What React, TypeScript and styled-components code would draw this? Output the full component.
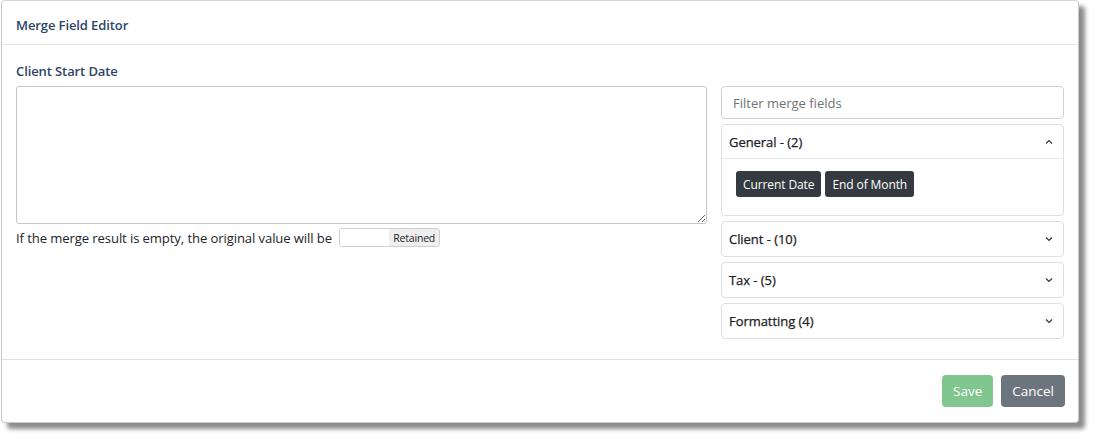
import React from "react";
import styled, { createGlobalStyle } from "styled-components";

const Global = createGlobalStyle`
  html, body { margin: 0; padding: 0; background: #ffffff; }
  body { font-family: "Open Sans", "Noto Sans", sans-serif; color: #212529; }
  * { box-sizing: border-box; }
`;

const Page = styled.div`
  width: 1095px;
  height: 438px;
  padding: 0 0 0 1px;
`;

const Dialog = styled.div`
  width: 1078px;
  height: 423px;
  background: #fff;
  border: 1px solid #c9c9c9;
  border-top-color: #d6d6d6;
  border-radius: 4px;
  box-shadow: 6px 6px 4px rgba(0, 0, 0, 0.45);
  display: flex;
  flex-direction: column;
`;

const Header = styled.div`
  height: 44px;
  border-bottom: 1px solid #e5e5e5;
  display: flex;
  align-items: center;
  padding: 5px 14px 0;
`;

const Title = styled.div`
  font-size: 13px;
  font-weight: 600;
  color: #2b4566;
  letter-spacing: -0.1px;
`;

const Body = styled.div`
  flex: 1;
  padding: 16px 14px 0;
  border-bottom: 1px solid #e0e0e6;
`;

const FieldLabel = styled.div`
  font-size: 13px;
  font-weight: 600;
  color: #2b4566;
  line-height: 20px;
  margin-bottom: 5px;
  letter-spacing: -0.1px;
`;

const Columns = styled.div`
  display: flex;
  gap: 14px;
`;

const LeftCol = styled.div`
  width: 691px;
  display: flex;
  flex-direction: column;
`;

const TextArea = styled.textarea`
  width: 691px;
  height: 138px;
  border: 1px solid #c6c6c6;
  border-radius: 3px;
  resize: vertical;
  font-family: inherit;
  margin: 0;
  display: block;
  outline: none;
`;

const EmptyRow = styled.div`
  display: flex;
  align-items: center;
  gap: 7px;
  margin-top: 4px;
  font-size: 13.1px;
  color: #212529;
  letter-spacing: -0.1px;
`;

const Toggle = styled.div`
  width: 101px;
  height: 19px;
  border: 1px solid #cfcfcf;
  border-radius: 3px;
  display: flex;
  overflow: hidden;
`;

const ToggleHalf = styled.div<{ $on?: boolean }>`
  flex: 1;
  background: ${(p) => (p.$on ? "#efefef" : "#ffffff")};
  font-size: 10.5px;
  display: flex;
  align-items: center;
  justify-content: center;
  color: #222;
  letter-spacing: -0.2px;
`;

const RightCol = styled.div`
  width: 345px;
  display: flex;
  flex-direction: column;
  gap: 5px;
`;

const Filter = styled.input`
  width: 100%;
  height: 33px;
  border: 1px solid #cdd1d5;
  border-radius: 4px;
  padding: 0 11px;
  font-family: inherit;
  font-size: 13px;
  outline: none;
  margin-bottom: 0;
  &::placeholder { color: #707478; }
`;

const Card = styled.div`
  border: 1px solid #dcdfe3;
  border-radius: 4px;
  display: flex;
  flex-direction: column;
`;

const CardHeader = styled.div<{ $open?: boolean }>`
  height: 34px;
  display: flex;
  align-items: center;
  justify-content: space-between;
  padding: 0 10px 0 7px;
  font-size: 13px;
  font-weight: 500;
  color: #1c2024;
  -webkit-text-stroke: 0.25px #1c2024;
  letter-spacing: -0.05px;
  border-bottom: ${(p) => (p.$open ? "1px solid #e5e7ea" : "none")};
`;

const CardBody = styled.div`
  display: flex;
  gap: 4px;
  padding: 12px 14px 18px;
`;

const FieldButton = styled.button`
  height: 26px;
  padding: 0 7px;
  background: #343a40;
  color: #fff;
  border: none;
  border-radius: 3px;
  font-family: inherit;
  font-size: 12px;
  letter-spacing: -0.1px;
`;

const Footer = styled.div`
  height: 62px;
  display: flex;
  justify-content: flex-end;
  align-items: flex-start;
  gap: 8px;
  padding: 15px 13px 0;
`;

const Btn = styled.button<{ $variant: "save" | "cancel" }>`
  height: 32px;
  border: none;
  border-radius: 4px;
  color: #fff;
  font-family: inherit;
  font-size: 13.5px;
  padding: 0 11px;
  background: ${(p) => (p.$variant === "save" ? "#80c68e" : "#6c757d")};
`;

const Chevron = ({ up }: { up?: boolean }) => (
  <svg width="8" height="6" viewBox="0 0 8 6">
    <polyline
      points={up ? "1,4.5 4,1.5 7,4.5" : "1,1.5 4,4.5 7,1.5"}
      fill="none"
      stroke="#333"
      strokeWidth="1.2"
    />
  </svg>
);

const groups = [
  { name: "Client - (10)" },
  { name: "Tax - (5)" },
  { name: "Formatting (4)" },
];

export default function App() {
  return (
    <Page>
      <Global />
      <Dialog>
        <Header>
          <Title>Merge Field Editor</Title>
        </Header>
        <Body>
          <FieldLabel>Client Start Date</FieldLabel>
          <Columns>
            <LeftCol>
              <TextArea />
              <EmptyRow>
                <span>If the merge result is empty, the original value will be</span>
                <Toggle>
                  <ToggleHalf />
                  <ToggleHalf $on>Retained</ToggleHalf>
                </Toggle>
              </EmptyRow>
            </LeftCol>
            <RightCol>
              <Filter placeholder="Filter merge fields" />
              <Card>
                <CardHeader $open>
                  <span>General - (2)</span>
                  <Chevron up />
                </CardHeader>
                <CardBody>
                  <FieldButton>Current Date</FieldButton>
                  <FieldButton>End of Month</FieldButton>
                </CardBody>
              </Card>
              {groups.map((g) => (
                <Card key={g.name}>
                  <CardHeader>
                    <span>{g.name}</span>
                    <Chevron />
                  </CardHeader>
                </Card>
              ))}
            </RightCol>
          </Columns>
        </Body>
        <Footer>
          <Btn $variant="save">Save</Btn>
          <Btn $variant="cancel">Cancel</Btn>
        </Footer>
      </Dialog>
    </Page>
  );
}
